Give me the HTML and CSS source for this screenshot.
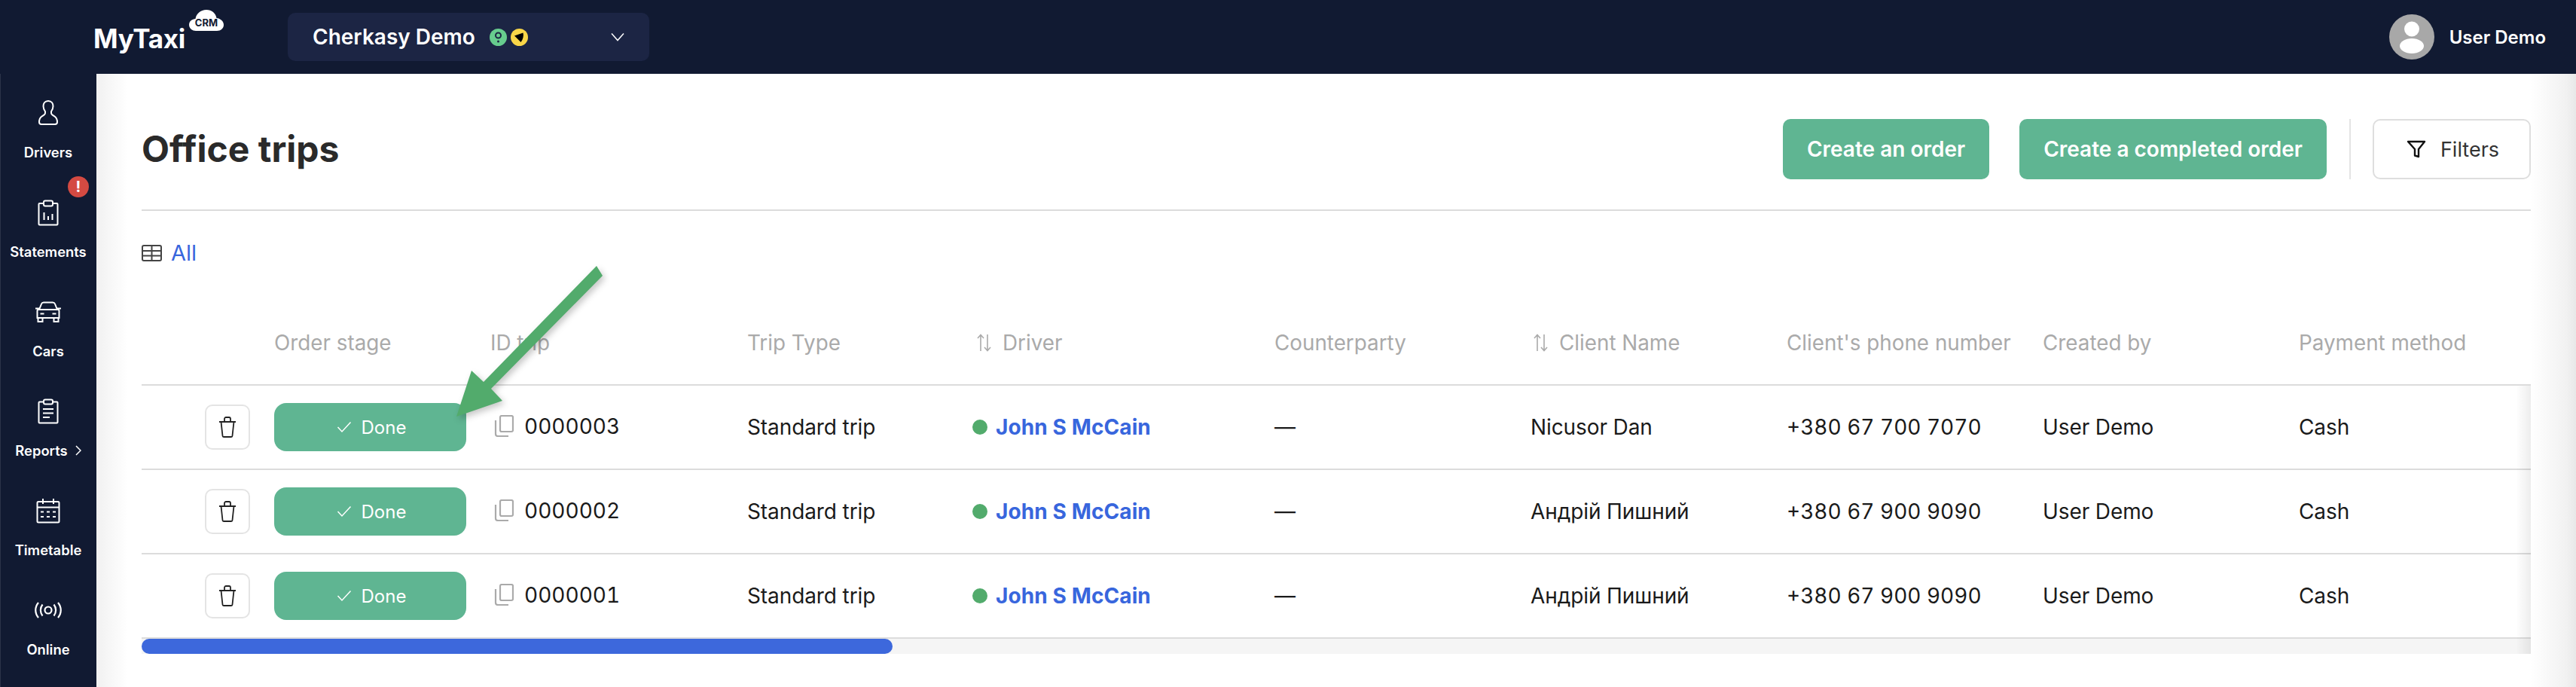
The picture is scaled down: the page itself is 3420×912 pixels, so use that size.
FILE: index.html
```html
<!DOCTYPE html>
<html lang="en">
<head>
<meta charset="utf-8">
<title>Office trips</title>
<link rel="stylesheet" href="styles.css">
</head>
<body>
<header class="topbar">
  <div class="logo">
    <span class="logo-text">MyTaxi</span>
    <svg class="logo-cloud" viewBox="0 0 46 28"><path fill="#fff" d="M9 28C4 28 0 24.500 0 20 0 15.500 3.500 12.500 8.500 12 9.500 5 15.500 0 23 0c7 0 12.500 4.500 13.500 11C42 11.500 46 15.500 46 20c0 4.500-4 8-9 8z"/><text x="23" y="22" text-anchor="middle" class="logo-crm">CRM</text></svg>
  </div>
  <div class="company">
    <span class="company-name">Cherkasy Demo</span>
    <svg class="company-badge" viewBox="0 0 23 23"><circle cx="11.500" cy="11.500" r="11.500" fill="#67cc8e"/><circle cx="11.500" cy="9" r="3.500" fill="none" stroke="#1c2544" stroke-width="2"/><circle cx="11.500" cy="17" r="1.500" fill="#1c2544"/></svg>
    <svg class="company-badge" viewBox="0 0 23 23"><circle cx="11.500" cy="11.500" r="11.500" fill="#f9d648"/><path d="M5 9.500 16.500 5.500c1 3.500 0 9-3 12.500z" fill="#000"/></svg>
    <svg class="company-chevron" viewBox="0 0 18 12"><path d="M1 1.500 9 10.500 17 1.500" fill="none" stroke="#fff" stroke-width="1.500"/></svg>
  </div>
  <div class="user">
    <svg class="user-avatar" viewBox="0 0 60 60"><circle cx="30" cy="30" r="30" fill="#a8a8a8"/><circle cx="30" cy="19.500" r="10" fill="#fff"/><ellipse cx="30" cy="42" rx="16" ry="10" fill="#fff"/></svg>
    <span class="user-name">User Demo</span>
  </div>
</header>
<div class="layout">
  <nav class="sidebar">
    <a class="nav-item">
      <span class="nav-icon"><svg width="28" height="36" viewBox="0 0 28 36"><path d="M14 2C9.500 2 7.500 5.500 7.500 9c0 3 1 5 2.500 7v2c0 2-2 3-4.500 4.500C3.500 24 2 26 2 30c0 2 1 3 3 3h18c2 0 3-1 3-3 0-4-1.500-6-3.500-7.500C20 21 18 20 18 18v-2c1.500-2 2.500-4 2.500-7C20.500 5.500 18.500 2 14 2z" fill="none" stroke="#fff" stroke-width="2"/></svg></span>
      <span class="nav-label">Drivers</span>
    </a>
    <a class="nav-item">
      <span class="nav-badge">!</span>
      <span class="nav-icon"><svg width="28" height="35" viewBox="0 0 28 35"><path d="M9 5H2.500a1 1 0 0 0-1 1v26.500a1 1 0 0 0 1 1h23a1 1 0 0 0 1-1V6a1 1 0 0 0-1-1H19" fill="none" stroke="#fff" stroke-width="2"/><rect x="8" y="1.500" width="12" height="7" rx="2" fill="none" stroke="#fff" stroke-width="2"/><path d="M8.500 17v10M14 22v5M19.500 19v8" stroke="#fff" stroke-width="2"/></svg></span>
      <span class="nav-label">Statements</span>
    </a>
    <a class="nav-item">
      <span class="nav-icon"><svg width="36" height="28" viewBox="0 0 36 28"><path d="M6 11 9 3.500C9.500 2.200 10.500 1.500 12 1.500h12c1.500 0 2.500.7 3 2L30 11M1 9.500h4.500L6 11M35 9.500h-4.500L30 11M5 11h26c.8 0 1.500.7 1.500 1.500V22H3.500v-9.500C3.500 11.700 4.200 11 5 11zM4.500 22v5h6v-5M25.500 22v5h6v-5M7.500 16.500h5M23.500 16.500h5" fill="none" stroke="#fff" stroke-width="2"/></svg></span>
      <span class="nav-label">Cars</span>
    </a>
    <a class="nav-item">
      <span class="nav-icon"><svg width="28" height="34" viewBox="0 0 28 34"><path d="M9 4.500H2.500a1 1 0 0 0-1 1V31.500a1 1 0 0 0 1 1h23a1 1 0 0 0 1-1V5.500a1 1 0 0 0-1-1H19" fill="none" stroke="#fff" stroke-width="2"/><rect x="8" y="1.500" width="12" height="6" rx="2" fill="none" stroke="#fff" stroke-width="2"/><path d="M7 14h14M7 19.500h14M7 25h9" stroke="#fff" stroke-width="2"/></svg></span>
      <span class="nav-label nav-label-more">Reports<svg width="8" height="14" viewBox="0 0 8 14"><path d="M1 1l6 6-6 6" fill="none" stroke="#fff" stroke-width="1.500"/></svg></span>
    </a>
    <a class="nav-item">
      <span class="nav-icon"><svg width="32" height="34" viewBox="0 0 32 34"><rect x="1.500" y="5" width="29" height="27.500" rx="1.500" fill="none" stroke="#fff" stroke-width="2"/><path d="M1.500 12.500h29M9 1v7M23 1v7" stroke="#fff" stroke-width="2"/><path d="M6 18.500h4M14 18.500h4M22 18.500h4M6 25h4M14 25h4M22 25h4" stroke="#fff" stroke-width="2"/></svg></span>
      <span class="nav-label">Timetable</span>
    </a>
    <a class="nav-item">
      <span class="nav-icon"><svg width="36" height="22" viewBox="0 0 36 22"><circle cx="18" cy="11" r="4.500" fill="none" stroke="#fff" stroke-width="2.200"/><path d="M10.500 3.500C7 8 7 14 10.500 18.500M25.500 3.500C29 8 29 14 25.500 18.500M5 1C0 7 0 15 5 21M31 1c5 6 5 14 0 20" fill="none" stroke="#fff" stroke-width="2.200"/></svg></span>
      <span class="nav-label">Online</span>
    </a>
  </nav>
  <main class="main">
    <div class="page-head">
      <h1 class="page-title">Office trips</h1>
      <button class="btn btn-primary">Create an order</button>
      <button class="btn btn-primary btn-wide">Create a completed order</button>
      <span class="head-divider"></span>
      <button class="btn btn-filter">
        <svg width="26" height="26" viewBox="0 0 26 26"><path d="M2 3h22l-8 10v10l-5-1.500V13z" fill="none" stroke="#111" stroke-width="2.400" stroke-linejoin="round"/></svg>
        Filters
      </button>
    </div>
    <div class="tabs">
      <svg class="tab-icon" viewBox="0 0 27 22"><rect x="1" y="1" width="25" height="20" rx="2" fill="none" stroke="#444" stroke-width="2"/><path d="M1 8h25M1 14.500h25M13.500 1v20" stroke="#444" stroke-width="2"/></svg>
      <a class="tab-link">All</a>
    </div>
    <div class="table-wrap">
      <table class="trips">
        <colgroup>
          <col class="c-actions"><col class="c-stage"><col class="c-id"><col class="c-type"><col class="c-driver"><col class="c-party"><col class="c-client"><col class="c-phone"><col class="c-author"><col>
        </colgroup>
        <thead>
          <tr>
            <th></th>
            <th>Order stage</th>
            <th>ID trip</th>
            <th>Trip Type</th>
            <th><span class="sortable sortable-driver"><svg class="sort-icon" viewBox="0 0 19 24"><path d="M5 23V2M1 6l4-4.500L9 6M14 1v21M10 18l4 4.500 4-4.500" fill="none" stroke="#aaa" stroke-width="1.600"/></svg>Driver</span></th>
            <th>Counterparty</th>
            <th><span class="sortable sortable-client"><svg class="sort-icon" viewBox="0 0 19 24"><path d="M5 23V2M1 6l4-4.500L9 6M14 1v21M10 18l4 4.500 4-4.500" fill="none" stroke="#aaa" stroke-width="1.600"/></svg>Client Name</span></th>
            <th>Client's phone number</th>
            <th>Created by</th>
            <th>Payment method</th>
          </tr>
        </thead>
        <tbody>
          <tr>
            <td><div class="trash-cell"><button class="trash"><svg width="24" height="28" viewBox="0 0 24 28"><path d="M1 7h22M8 7V3a2 2 0 0 1 2-2h4a2 2 0 0 1 2 2v4M3.500 7 5.500 25.500a1.500 1.500 0 0 0 1.500 1.500h10a1.500 1.500 0 0 0 1.500-1.500L20.500 7" fill="none" stroke="#222" stroke-width="1.800"/></svg></button></div></td>
            <td><button class="stage"><svg width="20" height="16" viewBox="0 0 20 16"><path d="M1.500 8 7 14 18.500 1.500" fill="none" stroke="#fff" stroke-width="1.500"/></svg>Done</button></td>
            <td><span class="trip-id"><svg class="copy-icon" viewBox="0 0 26 29"><rect x="8" y="1" width="17" height="21" rx="2" fill="none" stroke="#aaa" stroke-width="2.200"/><path d="M2 7v18a3 3 0 0 0 3 3h14" fill="none" stroke="#aaa" stroke-width="2.200"/></svg><span class="digits">0000003</span></span></td>
            <td>Standard trip</td>
            <td><span class="driver"><i class="driver-dot"></i><a class="driver-name">John S McCain</a></span></td>
            <td>—</td>
            <td>Nicusor Dan</td>
            <td class="digits">+380 67 700 7070</td>
            <td>User Demo</td>
            <td>Cash</td>
          </tr>
          <tr>
            <td><div class="trash-cell"><button class="trash"><svg width="24" height="28" viewBox="0 0 24 28"><path d="M1 7h22M8 7V3a2 2 0 0 1 2-2h4a2 2 0 0 1 2 2v4M3.500 7 5.500 25.500a1.500 1.500 0 0 0 1.500 1.500h10a1.500 1.500 0 0 0 1.500-1.500L20.500 7" fill="none" stroke="#222" stroke-width="1.800"/></svg></button></div></td>
            <td><button class="stage"><svg width="20" height="16" viewBox="0 0 20 16"><path d="M1.500 8 7 14 18.500 1.500" fill="none" stroke="#fff" stroke-width="1.500"/></svg>Done</button></td>
            <td><span class="trip-id"><svg class="copy-icon" viewBox="0 0 26 29"><rect x="8" y="1" width="17" height="21" rx="2" fill="none" stroke="#aaa" stroke-width="2.200"/><path d="M2 7v18a3 3 0 0 0 3 3h14" fill="none" stroke="#aaa" stroke-width="2.200"/></svg><span class="digits">0000002</span></span></td>
            <td>Standard trip</td>
            <td><span class="driver"><i class="driver-dot"></i><a class="driver-name">John S McCain</a></span></td>
            <td>—</td>
            <td>Андрій Пишний</td>
            <td class="digits">+380 67 900 9090</td>
            <td>User Demo</td>
            <td>Cash</td>
          </tr>
          <tr>
            <td><div class="trash-cell"><button class="trash"><svg width="24" height="28" viewBox="0 0 24 28"><path d="M1 7h22M8 7V3a2 2 0 0 1 2-2h4a2 2 0 0 1 2 2v4M3.500 7 5.500 25.500a1.500 1.500 0 0 0 1.500 1.500h10a1.500 1.500 0 0 0 1.500-1.500L20.500 7" fill="none" stroke="#222" stroke-width="1.800"/></svg></button></div></td>
            <td><button class="stage"><svg width="20" height="16" viewBox="0 0 20 16"><path d="M1.500 8 7 14 18.500 1.500" fill="none" stroke="#fff" stroke-width="1.500"/></svg>Done</button></td>
            <td><span class="trip-id"><svg class="copy-icon" viewBox="0 0 26 29"><rect x="8" y="1" width="17" height="21" rx="2" fill="none" stroke="#aaa" stroke-width="2.200"/><path d="M2 7v18a3 3 0 0 0 3 3h14" fill="none" stroke="#aaa" stroke-width="2.200"/></svg><span class="digits">0000001</span></span></td>
            <td>Standard trip</td>
            <td><span class="driver"><i class="driver-dot"></i><a class="driver-name">John S McCain</a></span></td>
            <td>—</td>
            <td>Андрій Пишний</td>
            <td class="digits">+380 67 900 9090</td>
            <td>User Demo</td>
            <td>Cash</td>
          </tr>
        </tbody>
      </table>
      <div class="scrollbar"><div class="scrollbar-thumb"></div></div>
    </div>
    <svg class="callout-arrow" viewBox="0 0 210 210"><path d="M192 3 200 16 52 166 67 182 6 203 26 142 42 157z" fill="#52ab6c"/></svg>
  </main>
</div>
</body>
</html>
```
FILE: styles.css
```css
* { box-sizing: border-box; }
html, body { margin: 0; height: 100%; }
body {
  width: 3420px;
  height: 912px;
  overflow: hidden;
  font-family: Inter, "Noto Sans", sans-serif;
  color: #1a1a1a;
  background: #fff;
  display: flex;
  flex-direction: column;
}
button { font-family: inherit; cursor: pointer; }

.topbar {
  flex: 0 0 98px;
  background: #111a32;
  display: flex;
  align-items: center;
  color: #fff;
}
.logo { position: relative; margin-left: 124px; width: 258px; height: 98px; flex: none; }
.logo-text { position: absolute; left: 0; top: 30px; font-size: 35px; line-height: 42px; font-weight: 700; letter-spacing: -0.3px; }
.logo-cloud { position: absolute; left: 127px; top: 13px; width: 46px; height: 28px; }
.logo-crm { font-family: Inter, sans-serif; font-size: 13px; font-weight: 700; fill: #111a32; }

.company {
  width: 480px;
  height: 64px;
  background: #1c2544;
  border-radius: 10px;
  display: flex;
  align-items: center;
  padding: 0 33px;
  gap: 5px;
}
.company-name { font-size: 28px; font-weight: 600; margin-right: 14px; }
.company-badge { width: 23px; height: 23px; }
.company-chevron { width: 18px; height: 12px; margin-left: auto; }

.user { margin-left: auto; margin-right: 40px; display: flex; align-items: center; gap: 20px; }
.user-avatar { width: 60px; height: 60px; }
.user-name { font-size: 24px; font-weight: 600; }

.layout { flex: 1; display: flex; min-height: 0; }
.sidebar {
  flex: 0 0 128px;
  background: #111a32;
  border-left: 1px solid #2b3349;
  padding-top: 32px;
}
.nav-item {
  position: relative;
  height: 132px;
  display: flex;
  flex-direction: column;
  align-items: center;
  gap: 20px;
  color: #fff;
  margin-left: -1px;
}
.nav-icon { height: 40px; display: flex; align-items: center; justify-content: center; }
.nav-label { font-size: 18.400px; line-height: 24px; font-weight: 600; white-space: nowrap; }
.nav-label-more { display: flex; align-items: center; gap: 10px; }
.nav-badge {
  position: absolute;
  left: 90px;
  top: -28px;
  width: 28px;
  height: 28px;
  border-radius: 50%;
  background: #d44a42;
  color: #fff;
  font-size: 20px;
  line-height: 28px;
  font-weight: 700;
  text-align: center;
}

.main {
  position: relative;
  flex: 1;
  min-width: 0;
  padding: 60px 60px 0;
  background:
    linear-gradient(to right, #f1f1f1 0, #fff 42px) left / 50% 100% no-repeat,
    linear-gradient(to left, #e8e8e8 0, #f1f1f1 12px, #fff 60px) right / 50% 100% no-repeat;
}
.page-head {
  display: flex;
  align-items: center;
  height: 122px;
  padding-bottom: 40px;
  border-bottom: 2px solid #dcdcdc;
}
.page-title { margin: 0 auto 0 0; font-size: 48px; font-weight: 700; color: #2a2a2a; line-height: 80px; }
.btn {
  height: 80px;
  border-radius: 10px;
  font-size: 28px;
  font-weight: 600;
  border: 0;
}
.btn-primary { width: 274px; background: #5fb592; color: #fff; }
.btn-wide { width: 408px; margin-left: 40px; }
.head-divider { width: 2px; height: 80px; background: #e4e4e4; margin: 0 29px 0 30px; }
.btn-filter {
  width: 210px;
  background: #fff;
  border: 2px solid #dedede;
  color: #333;
  font-size: 27px;
  font-weight: 400;
  display: flex;
  align-items: center;
  justify-content: center;
  gap: 19px;
  padding: 0 0 0 3px;
}

.tabs { display: flex; align-items: center; gap: 12px; height: 40px; margin: 36px 0 44px; }
.tab-icon { width: 27px; height: 22px; }
.tab-link { font-size: 29px; line-height: 40px; color: #3866dd; }

.table-wrap { position: relative; }
.table-wrap::after {
  content: "";
  position: absolute;
  right: 0;
  top: 112px;
  bottom: 0;
  width: 20px;
  background: linear-gradient(to right, rgba(0,0,0,0), rgba(0,0,0,0.07));
}
.trips { width: 100%; table-layout: fixed; border-collapse: separate; border-spacing: 0; font-size: 28px; letter-spacing: -0.1px; }
.c-actions { width: 176px; }
.c-stage { width: 287px; }
.c-id { width: 341px; }
.c-type { width: 299px; }
.c-driver { width: 401px; }
.c-party { width: 340px; }
.c-client { width: 340px; }
.c-phone { width: 340px; }
.c-author { width: 340px; }
.trips th {
  height: 112px;
  padding: 0;
  text-align: left;
  font-weight: 400;
  color: #aaa;
  font-size: 27.800px;
  letter-spacing: 0;
  border-bottom: 2px solid #dcdcdc;
  white-space: nowrap;
}
.trips td {
  height: 112px;
  padding: 0;
  border-bottom: 2px solid #dcdcdc;
  white-space: nowrap;
}
.trips .digits { font-size: 28px; letter-spacing: 0; font-variant-numeric: tabular-nums; }
.sortable { display: inline-flex; align-items: center; gap: 15px; padding-top: 2px; }
.sortable-driver { margin-left: 6px; }
.sortable-client { margin-left: 4px; }
.sort-icon { width: 19px; height: 24px; }

.trash-cell { display: flex; justify-content: flex-end; padding-right: 32px; }
.trash {
  width: 60px;
  height: 60px;
  background: #fff;
  border: 2px solid #e4e4e4;
  border-radius: 10px;
  padding: 0;
  display: flex;
  align-items: center;
  justify-content: center;
}
.stage {
  width: 255px;
  height: 64px;
  border: 0;
  border-radius: 16px;
  background: #5fb592;
  color: #fff;
  font-size: 24px;
  display: flex;
  align-items: center;
  justify-content: center;
  gap: 13px;
  padding: 0 0 0 3px;
}
.trip-id { display: inline-flex; align-items: center; gap: 14px; margin-left: 5px; padding-top: 2px; }
.copy-icon { width: 26px; height: 29px; }
.driver { display: inline-flex; align-items: center; gap: 11px; }
.driver-dot { width: 20px; height: 20px; border-radius: 50%; background: #52ab6c; }
.driver-name { color: #3866dd; font-weight: 700; font-size: 28px; letter-spacing: 0.1px; }

.scrollbar { height: 20px; background: #f5f5f5; }
.scrollbar-thumb { width: 997px; height: 20px; border-radius: 10px; background: #3d68dc; }

.callout-arrow {
  position: absolute;
  left: 472px;
  top: 252px;
  width: 210px;
  height: 210px;
  filter: drop-shadow(3px 4px 4px rgba(0,0,0,0.22));
}
```
